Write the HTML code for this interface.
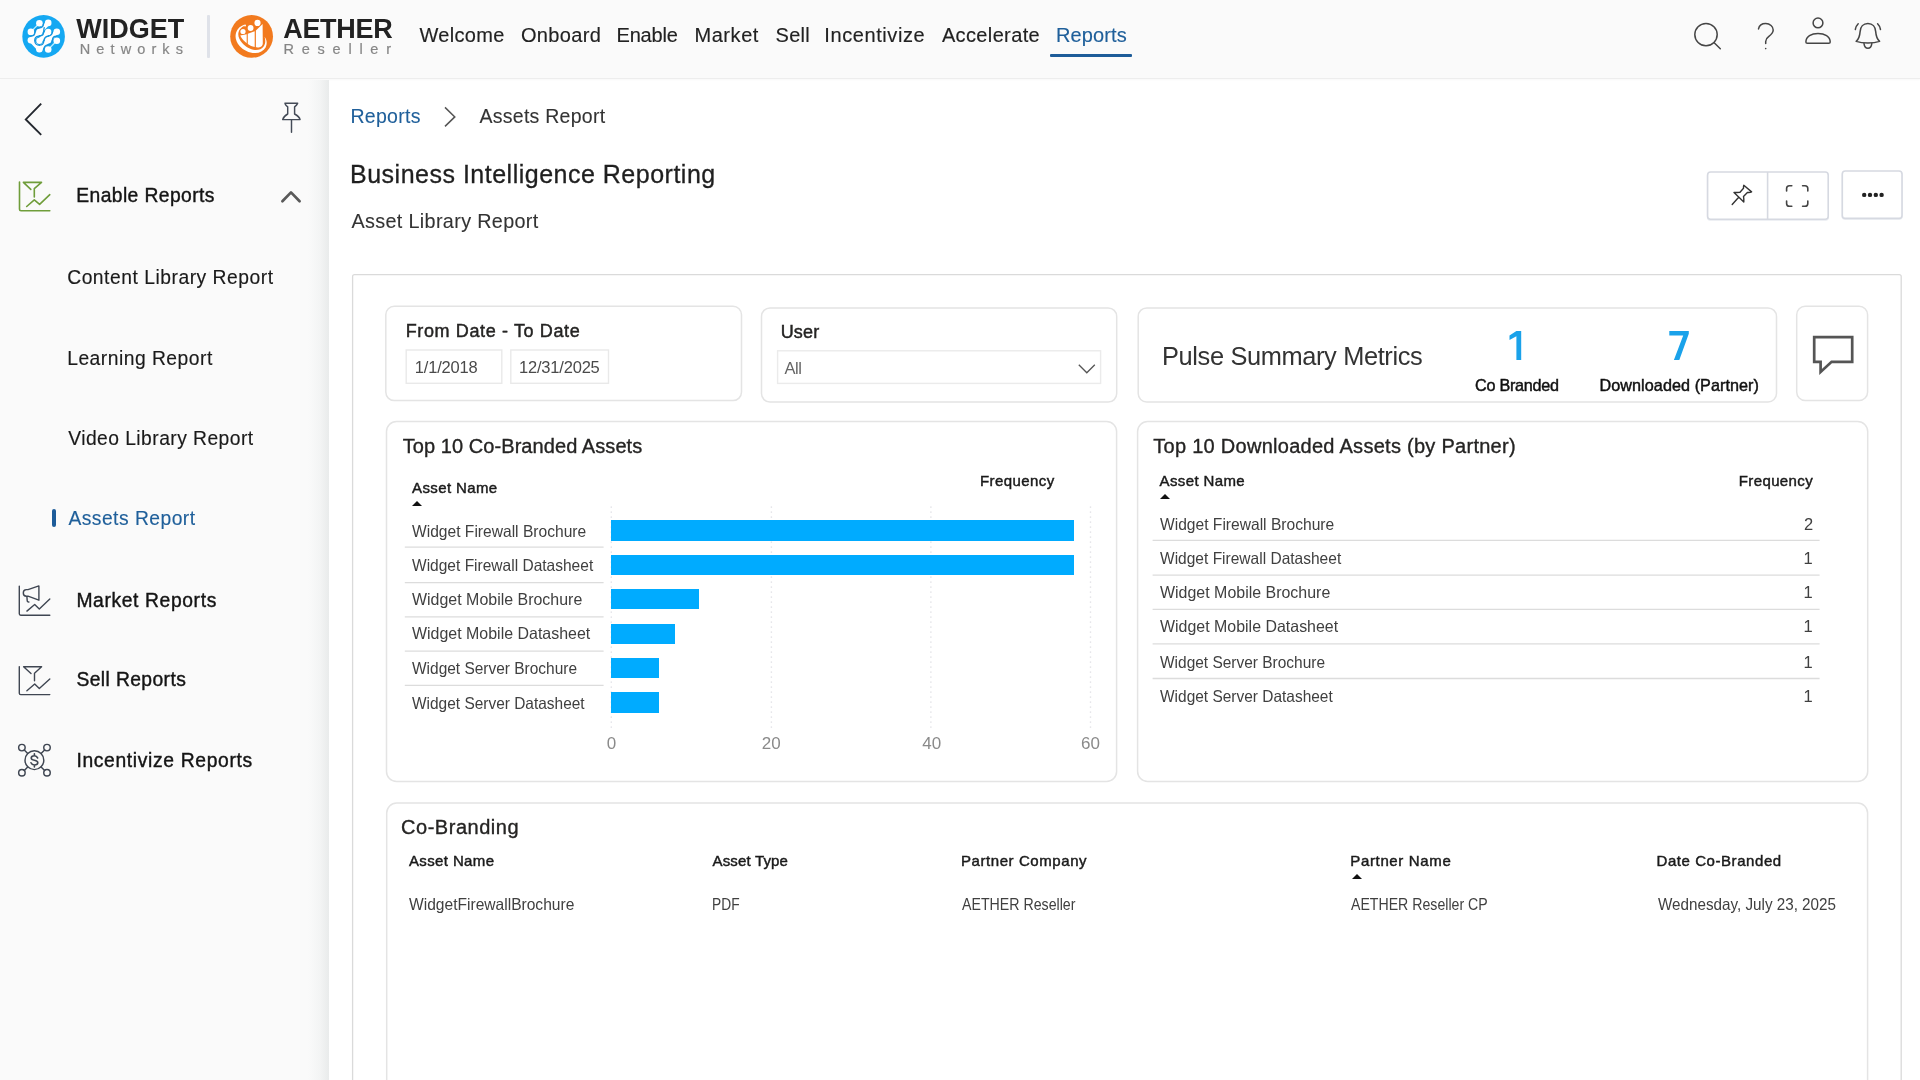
<!DOCTYPE html>
<html><head><meta charset="utf-8"><title>Assets Report</title>
<style>
html,body{margin:0;padding:0;}
body{width:1920px;height:1080px;overflow:hidden;position:relative;background:#fff;font-family:"Liberation Sans", sans-serif;}
.t{position:absolute;white-space:pre;line-height:1;font-family:"Liberation Sans", sans-serif;}
.a{position:absolute;}
#txt{position:absolute;left:0;top:0;width:1920px;height:1080px;will-change:transform;}

.hdr{position:absolute;left:0;top:0;width:1920px;height:78px;background:#fafafa;border-bottom:1px solid #ededed;box-shadow:0 1px 1.5px rgba(0,0,0,.03);}
.side{position:absolute;left:0;top:80px;width:329px;height:1000px;background:linear-gradient(90deg,#fafafa 0,#fafafa 308px,#f3f4f4 320px,#e9ebeb 329px);}
.bar{position:absolute;background:#00abff;left:611.3px;}
.tri{position:absolute;width:0;height:0;border-left:5px solid transparent;border-right:5px solid transparent;border-bottom:5px solid #111;}
svg{position:absolute;overflow:visible;}

</style></head>
<body>

<div class="hdr"></div>
<div class="side"></div>
<!-- nav underline -->
<div class="a" style="left:1050.4px;top:53.6px;width:82px;height:3.2px;background:#1d5c99;border-radius:1px"></div>
<!-- logo divider -->
<div class="a" style="left:207.2px;top:14.6px;width:2.8px;height:43.3px;background:#dfe2e9;border-radius:1px"></div>

<!-- Widget logo -->
<svg style="left:0;top:0" width="120" height="78" viewBox="0 0 120 78">
 <circle cx="43.6" cy="36.4" r="21.3" fill="#15a8f2"/>
 <g stroke="#fff" stroke-linecap="round" fill="none" stroke-width="4.5">
  <path d="M48.2 22.9 L39.4 31.9 L30.9 40.3"/>
  <path d="M48.2 31.9 L39.4 40.8"/>
  <path d="M56.8 31.8 L48.2 40.3 L39.4 49.2"/>
  <path d="M30.9 40.3 L39.4 49.2" stroke-width="4.2"/>
 </g>
 <g stroke="#b9ecff" stroke-linecap="round" fill="none" stroke-width="1.3">
  <path d="M30.9 31.9 L39.4 23.3"/><path d="M48.2 49.5 L56.8 40.8"/>
 </g>
 <g fill="#fff">
  <circle cx="39.4" cy="23.3" r="3.3"/><circle cx="48.2" cy="22.9" r="3.3"/>
  <circle cx="30.9" cy="31.9" r="3.3"/><circle cx="39.4" cy="31.9" r="3.2"/><circle cx="48.2" cy="31.9" r="3.2"/><circle cx="56.8" cy="31.8" r="3.3"/>
  <circle cx="30.9" cy="40.3" r="3.3"/><circle cx="39.4" cy="40.8" r="3.1"/><circle cx="48.2" cy="40.3" r="3.2"/><circle cx="56.8" cy="40.8" r="3.3"/>
  <circle cx="39.4" cy="49.2" r="3.3"/><circle cx="48.2" cy="49.5" r="3.3"/>
 </g>
 <g stroke="#1593dc" stroke-width="1.3" fill="none" stroke-linecap="round">
  <path d="M43.6 23.6 C43.4 26.4 41.6 27.8 39 27.8 C36.2 27.8 35 29.6 35 32 C35 34.4 33.4 36.2 30.4 36.2"/>
  <path d="M44.2 27.6 C43.6 30.2 43.8 33 43.2 34.2 C42.4 35.8 40.6 36 38.6 36.2 C36 36.6 34.6 38.6 34.8 41 C35 43.6 37 45.2 39.4 45.2 C41.8 45.2 43.6 43.6 43.8 41.2 C44 38.6 45.4 36.6 48 36.2 C50.4 35.9 52.2 34.4 52.4 32"/>
  <path d="M56.6 36.2 C54 36.2 52.6 37.6 52.4 40 C52.2 42.6 50.6 44.6 48 44.8 C45.4 45 44 46.8 43.8 49.2"/>
 </g>
</svg>

<!-- Aether logo -->
<svg style="left:200px;top:0" width="110" height="78" viewBox="200 0 110 78">
 <circle cx="251.6" cy="36.4" r="21.4" fill="#f27a1e"/>
 <path fill="#fff" d="M244.1 24.8 C240.5 26 237.4 28.6 236.2 32.2 C234.6 37 236 42 239.6 46 C243.6 50.4 249.4 53.2 255.4 53 C259.6 52.8 263.6 51 265.6 47.4 C267.4 44 267 39.8 264.6 36.7 C265.6 40 265.6 43.6 263.8 46.2 C261.8 49 258.6 50.2 255 50 C250.4 49.8 245.4 46.6 242 42.8 C239 39.4 237.6 35.6 238.6 32 C239.4 29.2 241.4 27.2 244.1 26 Z"/>
 <path fill="#fff" d="M240.2 35.5 L246.7 34.2 L246.7 43.2 C244 41.2 241.6 38.6 240.2 35.5 Z"/>
 <path fill="#fff" d="M247.8 33.7 L254.7 31.2 L254.7 47.1 C252.2 46.5 249.8 45.5 247.8 44 Z"/>
 <path fill="#fff" d="M255.9 30.5 L262.6 23.9 L262.8 43.6 C262.8 45.6 261.4 46.8 259.6 47.2 C258.4 47.5 257.1 47.5 255.9 47.3 Z"/>
 <circle cx="243" cy="31.5" r="2.6" fill="#fff"/>
 <circle cx="250.6" cy="28" r="2.9" fill="#fff"/>
 <circle cx="257.5" cy="22.9" r="3.1" fill="#fff"/>
 <circle cx="245" cy="25.4" r="1" fill="#fff"/>
</svg>

<!-- header right icons -->
<svg style="left:1680px;top:0" width="240" height="78" viewBox="1680 0 240 78" fill="none" stroke="#454545" stroke-width="1.5" stroke-linecap="round" stroke-linejoin="round">
 <circle cx="1706" cy="34.6" r="11.2"/><path d="M1714.2 42.8 L1720.3 48.7"/>
 <path d="M1758.5 28.9 C1759.2 25.6 1762 23.6 1765.7 23.6 C1770 23.6 1773.2 26.4 1773.2 30.1 C1773.2 33.3 1771 34.9 1768.6 36.6 C1766.6 38 1765.7 39.2 1765.7 41.4 L1765.7 43.6"/>
 <circle cx="1765.7" cy="48.6" r="0.8" fill="#454545" stroke="none"/>
 <circle cx="1818" cy="22.9" r="4.9"/>
 <path d="M1805.9 42 C1805.9 36.6 1811.4 33.4 1818 33.4 C1824.6 33.4 1830.2 36.6 1830.2 42 C1830.2 42.9 1829.7 43.3 1828.8 43.3 L1807.3 43.3 C1806.4 43.3 1805.9 42.9 1805.9 42 Z"/>
 <path d="M1867.9 23.6 C1863.2 23.6 1860.4 27 1860.1 31.6 C1859.8 35.8 1858.8 39 1856.2 41.4 C1859.8 42.6 1863.7 43 1867.9 43 C1872.1 43 1876 42.6 1879.6 41.4 C1877 39 1876 35.8 1875.7 31.6 C1875.4 27 1872.6 23.6 1867.9 23.6 Z"/>
 <path d="M1864 43.6 C1864.4 46.8 1865.8 48.2 1867.9 48.2 C1870 48.2 1871.4 46.8 1871.8 43.6"/>
 <path d="M1855.3 29.5 C1855.7 27.2 1856.8 25.2 1858.2 23.8"/>
 <path d="M1880.5 29.5 C1880.1 27.2 1879 25.2 1877.6 23.8"/>
</svg>

<!-- sidebar icons -->
<svg style="left:0;top:80px" width="329" height="1000" viewBox="0 80 329 1000" fill="none" stroke-linecap="round" stroke-linejoin="round">
 <path d="M41.2 103.7 L25.8 119.4 L41.2 134.9" stroke="#23272e" stroke-width="1.9" stroke-linejoin="miter" stroke-linecap="butt"/>
 <g stroke="#444b57" stroke-width="1.45"><path d="M284.9 103.2 L297.7 103.2 M285.2 103.9 Q285.6 105.1 287.7 106.9 L287.7 114 Q283.6 116.4 282.7 119.6 L300.1 119.6 Q299.2 116.4 294.6 114 L294.6 106.9 Q296.8 105.1 297.3 103.9 M291.5 120 L291.5 132.3"/></g>
 <!-- enable (green) -->
 <g stroke="#6f9d3a" stroke-width="1.6">
  <path d="M19.5 182 L19.5 209.2 Q19.5 210.7 21 210.7 L49.8 210.7"/>
  <path d="M30.8 189.4 L23.4 182.4 L41.5 182.4 L34.3 188.7 L34.3 197"/>
  <path d="M26.7 206.5 L34.3 199.8 L39.6 204.4 L49.8 194.7"/>
 </g>
 <path d="M282.4 201.2 L291 192.4 L299.6 201.2" stroke="#595959" stroke-width="2.7"/>
 <!-- active marker -->
 <!-- market -->
 <g stroke="#3f4652" stroke-width="1.4">
  <path d="M19.3 586.1 L19.3 613.8 Q19.3 615.2 20.7 615.2 L49.8 615.2"/>
  <path d="M28 589.6 L38.9 585.9 L38.9 600.2 L28 596.2 L26.4 596.2 Q23.3 596 23.3 592.9 Q23.3 589.8 26.4 589.6 Z"/>
  <path d="M26.9 596.6 L27.2 600.6 Q27.4 602.2 28.9 602"/>
  <path d="M26.9 611.1 L34.7 604.5 L39.3 609 L49.8 599.1"/>
 </g>
 <!-- sell -->
 <g stroke="#3f4652" stroke-width="1.4">
  <path d="M19.3 666.6 L19.3 693.2 Q19.3 694.6 20.7 694.6 L49.8 694.6"/>
  <path d="M31 673.6 L23.6 666.8 L41.6 666.8 L34.5 673.2 L34.5 680.8"/>
  <path d="M26.9 690.7 L34.7 684 L39.3 688.5 L49.8 678.9"/>
 </g>
 <!-- incentivize -->
 <g stroke="#3f4652" stroke-width="1.45">
  <circle cx="34.4" cy="760.2" r="9.4"/>
  <circle cx="21.9" cy="747.6" r="3.25"/><circle cx="47" cy="747.6" r="3.25"/>
  <circle cx="21.9" cy="772.7" r="3.25"/><circle cx="47" cy="772.7" r="3.25"/>
  <path d="M24.3 750 L27.7 753.5 M44.6 750 L41.1 753.5 M24.3 770.4 L27.7 766.9 M44.6 770.4 L41.1 766.9"/>
  <path stroke-width="1.6" d="M37.6 757.9 C37 756.4 35.8 755.7 34.4 755.7 C32.4 755.7 31.2 756.7 31.2 758.1 C31.2 759.5 32.2 760 34.4 760.3 C36.8 760.7 37.8 761.4 37.8 762.8 C37.8 764.2 36.4 765 34.4 765 C32.8 765 31.6 764.3 31 762.8 M34.4 753.7 L34.4 755.7 M34.4 765 L34.4 767"/>
 </g>
</svg>
<div class="a" style="left:51.6px;top:509px;width:4.4px;height:18.4px;background:#1d5c99;border-radius:2.2px"></div>

<!-- breadcrumb chevron -->
<svg style="left:440px;top:100px" width="30" height="40" viewBox="440 100 30 40" fill="none" stroke="#555" stroke-width="1.5"><path d="M445 107.4 L454.8 116.9 L445 126.4"/></svg>

<!-- toolbar -->
<svg style="left:0;top:0" width="1920" height="1080" viewBox="0 0 1920 1080" fill="none">
 <rect x="1707.6" y="172.9" width="120.6" height="47.3" rx="3" stroke="#eef0f4" stroke-width="1.6"/>
 <rect x="1842.3" y="171.9" width="59.7" height="47.4" rx="3" stroke="#eef0f4" stroke-width="1.6"/>
 <rect x="1707.6" y="172" width="120.6" height="47.3" rx="3" stroke="#d6d9e1" stroke-width="1.6" fill="#fff"/>
 <path d="M1767.6 172 L1767.6 219.3" stroke="#d6d9e1" stroke-width="1.6"/>
 <rect x="1842.3" y="171" width="59.7" height="47.4" rx="3" stroke="#d6d9e1" stroke-width="1.6" fill="#fff"/>
</svg>
<svg style="left:1700px;top:165px" width="210" height="60" viewBox="1700 165 210 60" fill="none" stroke="#333" stroke-width="1.4" stroke-linecap="round" stroke-linejoin="round">
 <path d="M1743.8 185.3 L1751.6 191.9 Q1750 192.7 1747.4 192.4 L1743.5 196.4 Q1744 199 1743.8 202 L1734 192.5 Q1737 192.5 1740 192.2 L1743.5 188.3 Q1743.4 186.6 1743.8 185.3 Z M1738 198 L1732.2 204.5"/>
 <g stroke="#444" stroke-width="1.6">
  <path d="M1786.6 191 L1786.6 188.6 Q1786.6 185.8 1789.4 185.8 L1791.8 185.8"/>
  <path d="M1802.6 185.8 L1805 185.8 Q1807.8 185.8 1807.8 188.6 L1807.8 191"/>
  <path d="M1807.8 201 L1807.8 203.4 Q1807.8 206.2 1805 206.2 L1802.6 206.2"/>
  <path d="M1791.8 206.2 L1789.4 206.2 Q1786.6 206.2 1786.6 203.4 L1786.6 201"/>
 </g>
 <g fill="#222" stroke="none"><circle cx="1864.2" cy="194.9" r="2.2"/><circle cx="1870" cy="194.9" r="2.2"/><circle cx="1875.8" cy="194.9" r="2.2"/><circle cx="1881.6" cy="194.9" r="2.2"/></g>
</svg>

<!-- report panel + cards -->
<svg style="left:0;top:0" width="1920" height="1080" viewBox="0 0 1920 1080" fill="none">
 <rect x="352.6" y="274.6" width="1548.6" height="825.4" rx="2" stroke="#dadada" stroke-width="1.3" fill="#fff"/>
 <rect x="385.8" y="306.3" width="355.7" height="94.3" rx="8.5" stroke="#e4e4e4" stroke-width="1.5" fill="#fff"/>
 <rect x="406.2" y="350" width="95.6" height="33.3" rx="0" stroke="#e9e9e9" stroke-width="1.4" fill="#fff"/>
 <rect x="510.8" y="350" width="97.7" height="33.3" rx="0" stroke="#e9e9e9" stroke-width="1.4" fill="#fff"/>
 <rect x="761.5" y="307.9" width="355.2" height="94.2" rx="8.5" stroke="#e4e4e4" stroke-width="1.5" fill="#fff"/>
 <rect x="777.6" y="350.8" width="323.0" height="32.6" rx="0" stroke="#ebebeb" stroke-width="1.4" fill="#fff"/>
 <rect x="1138.2" y="307.9" width="638.3" height="94.1" rx="8.5" stroke="#e4e4e4" stroke-width="1.5" fill="#fff"/>
 <rect x="1796.7" y="306.3" width="70.9" height="94.1" rx="8.5" stroke="#e4e4e4" stroke-width="1.5" fill="#fff"/>
 <rect x="386.5" y="421.6" width="730.1" height="359.9" rx="10" stroke="#e4e4e4" stroke-width="1.5" fill="#fff"/>
 <rect x="1137.6" y="421.6" width="730.1" height="359.9" rx="10" stroke="#e4e4e4" stroke-width="1.5" fill="#fff"/>
 <rect x="386.7" y="803" width="1480.9" height="297" rx="10" stroke="#e4e4e4" stroke-width="1.5" fill="#fff"/>
</svg>

<!-- filter cards -->
<svg style="left:1070px;top:355px" width="40" height="30" viewBox="1070 355 40 30" fill="none" stroke="#555" stroke-width="1.3"><path d="M1078.8 364.8 L1086.8 372.8 L1094.8 364.8"/></svg>
<svg style="left:1800px;top:325px" width="70" height="60" viewBox="1800 325 70 60" fill="none" stroke="#555" stroke-width="2.7" stroke-linejoin="miter"><path d="M1814.2 337.2 L1852.2 337.2 L1852.2 361.8 L1831.6 361.8 L1820.6 372 L1820.6 361.8 L1814.2 361.8 Z"/></svg>

<svg style="left:0;top:0" width="1920" height="1080" viewBox="0 0 1920 1080" fill="#1aa2ea">
 <path d="M1516.4 330.9 L1521.2 330.9 L1521.2 360.1 L1516.4 360.1 L1516.4 336.3 L1509.5 340.1 L1509.5 335.5 Z"/>
 <path d="M1669.3 330.9 L1688.8 330.9 L1688.8 333.8 L1679.3 360.1 L1673.9 360.1 L1683.2 335.5 L1669.3 335.5 Z"/>
</svg>
<!-- left chart card -->
<svg style="left:0;top:0" width="1920" height="1080" viewBox="0 0 1920 1080" fill="none" stroke="#e4e4e9" stroke-width="1.7" stroke-linecap="round" stroke-dasharray="0.1 4.9"><path d="M611.3 507 L611.3 729.5"/><path d="M771.4 507 L771.4 729.5"/><path d="M930.9 507 L930.9 729.5"/><path d="M1090.5 507 L1090.5 729.5"/></svg>
<div class="bar" style="top:520.4px;height:20.2px;width:462.6px"></div>
<div class="bar" style="top:554.6px;height:20.3px;width:462.6px"></div>
<div class="bar" style="top:589.2px;height:20px;width:87.6px"></div>
<div class="bar" style="top:623.7px;height:20px;width:63.6px"></div>
<div class="bar" style="top:658px;height:20.3px;width:47.6px"></div>
<div class="bar" style="top:692.4px;height:20.3px;width:47.6px"></div>
<div class="tri" style="left:412px;top:500.8px"></div>

<!-- right table card -->
<svg style="left:0;top:0" width="1920" height="1080" viewBox="0 0 1920 1080" fill="none" stroke="#dcdcdc" stroke-width="1.3"><path d="M404.8 547.1 L603.6 547.1"/><path d="M404.8 582.6 L603.6 582.6"/><path d="M404.8 616.8 L603.6 616.8"/><path d="M404.8 651.1 L603.6 651.1"/><path d="M404.8 685.3 L603.6 685.3"/><path d="M1152.6 540.3 L1819.6 540.3"/><path d="M1152.6 575.1 L1819.6 575.1"/><path d="M1152.6 609.3 L1819.6 609.3"/><path d="M1152.6 643.8 L1819.6 643.8"/><path d="M1152.6 678.5 L1819.6 678.5"/></svg>
<div class="tri" style="left:1159.8px;top:493.8px"></div>

<!-- bottom card -->
<div class="tri" style="left:1351.6px;top:874.2px"></div>

<div id="txt">
<span class="t" style="left:76.30px;top:16.00px;font-size:27px;font-weight:700;color:#222;letter-spacing:-0.020px;">WIDGET</span>
<span class="t" style="left:79.80px;top:42.00px;font-size:14.5px;font-weight:400;color:#868686;letter-spacing:6.100px;-webkit-text-stroke:0.2px #868686;">Networks</span>
<span class="t" style="left:283.20px;top:16.00px;font-size:27px;font-weight:700;color:#222;letter-spacing:-0.300px;">AETHER</span>
<span class="t" style="left:283.60px;top:42.00px;font-size:14.5px;font-weight:400;color:#868686;letter-spacing:7.743px;-webkit-text-stroke:0.2px #868686;">Reseller</span>
<span class="t" style="left:419.40px;top:25.00px;font-size:20px;font-weight:400;color:#222;letter-spacing:0.317px;-webkit-text-stroke:0.15px #222;">Welcome</span>
<span class="t" style="left:520.90px;top:25.00px;font-size:20px;font-weight:400;color:#222;letter-spacing:0.350px;-webkit-text-stroke:0.15px #222;">Onboard</span>
<span class="t" style="left:616.50px;top:25.00px;font-size:20px;font-weight:400;color:#222;letter-spacing:-0.200px;-webkit-text-stroke:0.15px #222;">Enable</span>
<span class="t" style="left:694.40px;top:25.00px;font-size:20px;font-weight:400;color:#222;letter-spacing:0.580px;-webkit-text-stroke:0.15px #222;">Market</span>
<span class="t" style="left:775.50px;top:25.00px;font-size:20px;font-weight:400;color:#222;letter-spacing:0.300px;-webkit-text-stroke:0.15px #222;">Sell</span>
<span class="t" style="left:824.30px;top:25.00px;font-size:20px;font-weight:400;color:#222;letter-spacing:0.590px;-webkit-text-stroke:0.15px #222;">Incentivize</span>
<span class="t" style="left:941.90px;top:25.00px;font-size:20px;font-weight:400;color:#222;letter-spacing:0.367px;-webkit-text-stroke:0.15px #222;">Accelerate</span>
<span class="t" style="left:1056.00px;top:25.00px;font-size:20px;font-weight:400;color:#1f5f9a;letter-spacing:0.117px;-webkit-text-stroke:0.15px #1f5f9a;">Reports</span>
<span class="t" style="left:76.30px;top:186.00px;font-size:19.3px;font-weight:400;color:#141414;letter-spacing:0.400px;-webkit-text-stroke:0.4px #141414;">Enable Reports</span>
<span class="t" style="left:67.20px;top:268.00px;font-size:19.3px;font-weight:400;color:#1a1a1a;letter-spacing:0.514px;-webkit-text-stroke:0.15px #1a1a1a;">Content Library Report</span>
<span class="t" style="left:67.20px;top:349.00px;font-size:19.3px;font-weight:400;color:#1a1a1a;letter-spacing:0.486px;-webkit-text-stroke:0.15px #1a1a1a;">Learning Report</span>
<span class="t" style="left:68.20px;top:429.00px;font-size:19.3px;font-weight:400;color:#1a1a1a;letter-spacing:0.447px;-webkit-text-stroke:0.15px #1a1a1a;">Video Library Report</span>
<span class="t" style="left:68.40px;top:509.00px;font-size:19.3px;font-weight:400;color:#1f5f9a;letter-spacing:0.467px;-webkit-text-stroke:0.15px #1f5f9a;">Assets Report</span>
<span class="t" style="left:76.40px;top:591.00px;font-size:19.3px;font-weight:400;color:#141414;letter-spacing:0.623px;-webkit-text-stroke:0.4px #141414;">Market Reports</span>
<span class="t" style="left:76.40px;top:670.00px;font-size:19.3px;font-weight:400;color:#141414;letter-spacing:0.400px;-webkit-text-stroke:0.4px #141414;">Sell Reports</span>
<span class="t" style="left:76.40px;top:751.00px;font-size:19.3px;font-weight:400;color:#141414;letter-spacing:0.656px;-webkit-text-stroke:0.4px #141414;">Incentivize Reports</span>
<span class="t" style="left:350.50px;top:107.00px;font-size:19.5px;font-weight:400;color:#1f5f9a;letter-spacing:0.283px;-webkit-text-stroke:0.1px #1f5f9a;">Reports</span>
<span class="t" style="left:479.60px;top:107.00px;font-size:19.5px;font-weight:400;color:#333;letter-spacing:0.250px;-webkit-text-stroke:0.1px #333;">Assets Report</span>
<span class="t" style="left:350.00px;top:162.00px;font-size:25px;font-weight:400;color:#1f1f1f;letter-spacing:0.500px;-webkit-text-stroke:0.3px #1f1f1f;">Business Intelligence Reporting</span>
<span class="t" style="left:351.50px;top:212.00px;font-size:19.8px;font-weight:400;color:#333;letter-spacing:0.342px;-webkit-text-stroke:0.1px #333;">Asset Library Report</span>
<span class="t" style="left:405.70px;top:322.00px;font-size:18px;font-weight:400;color:#252423;letter-spacing:0.628px;-webkit-text-stroke:0.45px #252423;">From Date - To Date</span>
<span class="t" style="left:414.80px;top:359.00px;font-size:16.5px;font-weight:400;color:#4a4a4a;letter-spacing:-0.186px;">1/1/2018</span>
<span class="t" style="left:519.00px;top:359.00px;font-size:16.5px;font-weight:400;color:#4a4a4a;letter-spacing:-0.200px;">12/31/2025</span>
<span class="t" style="left:780.70px;top:323.00px;font-size:18px;font-weight:400;color:#252423;letter-spacing:0.167px;-webkit-text-stroke:0.45px #252423;">User</span>
<span class="t" style="left:784.40px;top:360.00px;font-size:16.5px;font-weight:400;color:#666;letter-spacing:-0.350px;">All</span>
<span class="t" style="left:1162.00px;top:344.00px;font-size:25.4px;font-weight:400;color:#333;letter-spacing:-0.365px;">Pulse Summary Metrics</span>
<span class="t" style="left:1475.10px;top:377.00px;font-size:16.2px;font-weight:400;color:#111;letter-spacing:-0.278px;-webkit-text-stroke:0.45px #111;">Co Branded</span>
<span class="t" style="left:1599.50px;top:377.00px;font-size:16.2px;font-weight:400;color:#111;letter-spacing:0.058px;-webkit-text-stroke:0.45px #111;">Downloaded (Partner)</span>
<span class="t" style="left:402.70px;top:436.00px;font-size:20px;font-weight:400;color:#252423;letter-spacing:0.070px;-webkit-text-stroke:0.35px #252423;">Top 10 Co-Branded Assets</span>
<span class="t" style="left:412.10px;top:480.00px;font-size:15px;font-weight:400;color:#1a1a1a;letter-spacing:0.378px;-webkit-text-stroke:0.45px #1a1a1a;">Asset Name</span>
<span class="t" style="left:980.00px;top:473.00px;font-size:15px;font-weight:400;color:#1a1a1a;letter-spacing:0.412px;-webkit-text-stroke:0.45px #1a1a1a;">Frequency</span>
<span class="t" style="left:411.70px;top:523.00px;font-size:16.5px;font-weight:400;color:#404040;transform:scaleX(0.9451);transform-origin:0 0;">Widget Firewall Brochure</span>
<span class="t" style="left:411.70px;top:557.00px;font-size:16.5px;font-weight:400;color:#404040;transform:scaleX(0.9409);transform-origin:0 0;">Widget Firewall Datasheet</span>
<span class="t" style="left:411.70px;top:591.00px;font-size:16.5px;font-weight:400;color:#404040;transform:scaleX(0.9670);transform-origin:0 0;">Widget Mobile Brochure</span>
<span class="t" style="left:411.70px;top:625.00px;font-size:16.5px;font-weight:400;color:#404040;transform:scaleX(0.9668);transform-origin:0 0;">Widget Mobile Datasheet</span>
<span class="t" style="left:411.70px;top:660.00px;font-size:16.5px;font-weight:400;color:#404040;transform:scaleX(0.9375);transform-origin:0 0;">Widget Server Brochure</span>
<span class="t" style="left:411.70px;top:695.00px;font-size:16.5px;font-weight:400;color:#404040;transform:scaleX(0.9364);transform-origin:0 0;">Widget Server Datasheet</span>
<span class="t" style="left:606.85px;top:735.00px;font-size:17px;font-weight:400;color:#8a8a8a;">0</span>
<span class="t" style="left:761.75px;top:735.00px;font-size:17px;font-weight:400;color:#8a8a8a;">20</span>
<span class="t" style="left:922.20px;top:735.00px;font-size:17px;font-weight:400;color:#8a8a8a;">40</span>
<span class="t" style="left:1081.05px;top:735.00px;font-size:17px;font-weight:400;color:#8a8a8a;">60</span>
<span class="t" style="left:1153.30px;top:436.00px;font-size:20px;font-weight:400;color:#252423;letter-spacing:0.275px;-webkit-text-stroke:0.35px #252423;">Top 10 Downloaded Assets (by Partner)</span>
<span class="t" style="left:1159.60px;top:473.00px;font-size:15px;font-weight:400;color:#1a1a1a;letter-spacing:0.378px;-webkit-text-stroke:0.45px #1a1a1a;">Asset Name</span>
<span class="t" style="left:1738.70px;top:473.00px;font-size:15px;font-weight:400;color:#1a1a1a;letter-spacing:0.400px;-webkit-text-stroke:0.45px #1a1a1a;">Frequency</span>
<span class="t" style="left:1159.60px;top:516.00px;font-size:16.5px;font-weight:400;color:#404040;transform:scaleX(0.9451);transform-origin:0 0;">Widget Firewall Brochure</span>
<span class="t" style="left:1159.60px;top:550.00px;font-size:16.5px;font-weight:400;color:#404040;transform:scaleX(0.9409);transform-origin:0 0;">Widget Firewall Datasheet</span>
<span class="t" style="left:1159.60px;top:584.00px;font-size:16.5px;font-weight:400;color:#404040;transform:scaleX(0.9670);transform-origin:0 0;">Widget Mobile Brochure</span>
<span class="t" style="left:1159.60px;top:618.00px;font-size:16.5px;font-weight:400;color:#404040;transform:scaleX(0.9663);transform-origin:0 0;">Widget Mobile Datasheet</span>
<span class="t" style="left:1159.60px;top:654.00px;font-size:16.5px;font-weight:400;color:#404040;transform:scaleX(0.9375);transform-origin:0 0;">Widget Server Brochure</span>
<span class="t" style="left:1159.60px;top:688.00px;font-size:16.5px;font-weight:400;color:#404040;transform:scaleX(0.9370);transform-origin:0 0;">Widget Server Datasheet</span>
<span class="t" style="left:1804.10px;top:516.00px;font-size:16.5px;font-weight:400;color:#404040;">2</span>
<span class="t" style="left:1803.60px;top:550.00px;font-size:16.5px;font-weight:400;color:#404040;">1</span>
<span class="t" style="left:1803.60px;top:584.00px;font-size:16.5px;font-weight:400;color:#404040;">1</span>
<span class="t" style="left:1803.60px;top:618.00px;font-size:16.5px;font-weight:400;color:#404040;">1</span>
<span class="t" style="left:1803.60px;top:654.00px;font-size:16.5px;font-weight:400;color:#404040;">1</span>
<span class="t" style="left:1803.60px;top:688.00px;font-size:16.5px;font-weight:400;color:#404040;">1</span>
<span class="t" style="left:401.00px;top:817.00px;font-size:20px;font-weight:400;color:#252423;letter-spacing:0.530px;-webkit-text-stroke:0.35px #252423;">Co-Branding</span>
<span class="t" style="left:409.00px;top:853.00px;font-size:15px;font-weight:400;color:#1a1a1a;letter-spacing:0.367px;-webkit-text-stroke:0.45px #1a1a1a;">Asset Name</span>
<span class="t" style="left:712.50px;top:853.00px;font-size:15px;font-weight:400;color:#1a1a1a;letter-spacing:0.167px;-webkit-text-stroke:0.45px #1a1a1a;">Asset Type</span>
<span class="t" style="left:961.00px;top:853.00px;font-size:15px;font-weight:400;color:#1a1a1a;letter-spacing:0.571px;-webkit-text-stroke:0.45px #1a1a1a;">Partner Company</span>
<span class="t" style="left:1350.30px;top:853.00px;font-size:15px;font-weight:400;color:#1a1a1a;letter-spacing:0.645px;-webkit-text-stroke:0.45px #1a1a1a;">Partner Name</span>
<span class="t" style="left:1656.50px;top:853.00px;font-size:15px;font-weight:400;color:#1a1a1a;letter-spacing:0.564px;-webkit-text-stroke:0.45px #1a1a1a;">Date Co-Branded</span>
<span class="t" style="left:409.00px;top:896.00px;font-size:16.5px;font-weight:400;color:#404040;transform:scaleX(0.9440);transform-origin:0 0;">WidgetFirewallBrochure</span>
<span class="t" style="left:711.67px;top:896.00px;font-size:16.5px;font-weight:400;color:#404040;transform:scaleX(0.8344);transform-origin:0 0;">PDF</span>
<span class="t" style="left:962.00px;top:896.00px;font-size:16.5px;font-weight:400;color:#404040;transform:scaleX(0.8591);transform-origin:0 0;">AETHER Reseller</span>
<span class="t" style="left:1351.30px;top:896.00px;font-size:16.5px;font-weight:400;color:#404040;transform:scaleX(0.8566);transform-origin:0 0;">AETHER Reseller CP</span>
<span class="t" style="left:1657.50px;top:896.00px;font-size:16.5px;font-weight:400;color:#404040;transform:scaleX(0.9224);transform-origin:0 0;">Wednesday, July 23, 2025</span>
</div>
</body></html>
